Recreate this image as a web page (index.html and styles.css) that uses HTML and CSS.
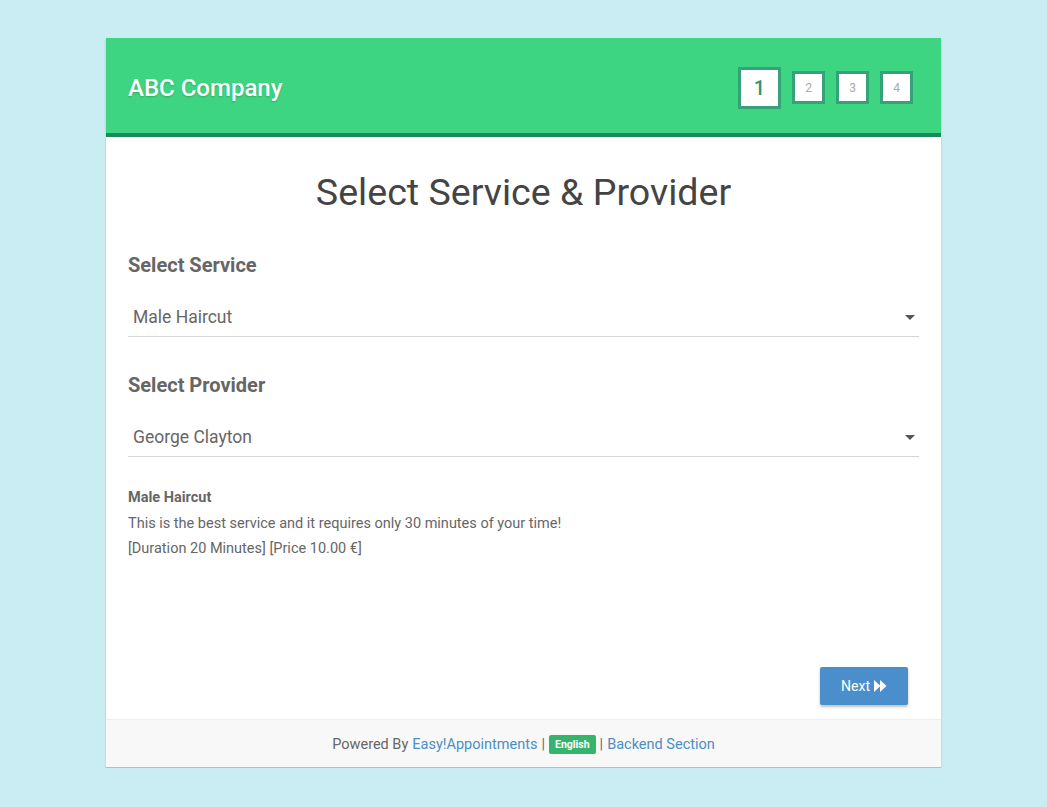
FILE: index.html
```html
<!DOCTYPE html>
<html>
<head>
<meta charset="utf-8">
<link rel="stylesheet" href="styles.css">
</head>
<body>
<div class="wizard">
  <header class="header">
    <div class="company">ABC Company</div>
    <div class="steps">
      <div class="step active">1</div>
      <div class="step">2</div>
      <div class="step">3</div>
      <div class="step">4</div>
    </div>
  </header>
  <main class="content">
    <h1 class="title">Select Service &amp; Provider</h1>
    <h2 class="label">Select Service</h2>
    <div class="select"><span>Male Haircut</span><span class="caret"></span></div>
    <h2 class="label">Select Provider</h2>
    <div class="select"><span>George Clayton</span><span class="caret"></span></div>
    <div class="details">
      <div class="details-name">Male Haircut</div>
      <div>This is the best service and it requires only 30 minutes of your time!</div>
      <div>[Duration 20 Minutes] [Price 10.00 €]</div>
    </div>
    <div class="actions">
      <button class="next">Next <svg width="13" height="12" viewBox="0 0 13 12"><path d="M0 0 L6.5 6 L0 12 Z M6 0 L12.5 6 L6 12 Z" fill="#fff"/></svg></button>
    </div>
  </main>
  <footer class="footer">
    Powered By <a class="link">Easy!Appointments</a> | <span class="badge">English</span> | <a class="link">Backend Section</a>
  </footer>
</div>
</body>
</html>
```
FILE: styles.css
```css
* { box-sizing: border-box; }
html, body { margin: 0; padding: 0; }
body {
  background: #caedf3;
  font-family: Roboto, "Liberation Sans", sans-serif;
  padding-top: 38px;
}
.wizard {
  width: 835px;
  margin-left: 106px;
  background: #fff;
  box-shadow: 0 1px 2px rgba(0,0,0,0.18);
}
.header {
  height: 99px;
  background: #3dd581;
  border-bottom: 4px solid #1b8a5a;
  display: flex;
  align-items: center;
  justify-content: space-between;
  padding: 0 28px 0 22px;
}
.company {
  color: #fff;
  font-size: 24px;
  font-weight: 500;
  text-shadow: 0 1px 2px rgba(0,0,0,0.2);
  margin-top: 4px;
}
.steps {
  display: flex;
  align-items: center;
  gap: 11px;
  margin-top: 4px;
}
.step {
  width: 33px;
  height: 33px;
  background: #fff;
  border: 3px solid #35a277;
  color: #aaa;
  font-size: 12px;
  display: flex;
  align-items: center;
  justify-content: center;
}
.step.active {
  width: 43px;
  height: 42px;
  color: #34946b;
  font-size: 20px;
  font-weight: 500;
}
.content {
  padding: 33px 22px 14px 22px;
}
.title {
  margin: 0 0 39px 0;
  text-align: center;
  font-size: 37.6px;
  font-weight: 400;
  color: #444;
  line-height: 44px;
}
.label {
  margin: 0 0 19px 0;
  font-size: 20px;
  font-weight: 700;
  color: #666;
  line-height: 24px;
}
.select {
  height: 41px;
  padding: 2px 4px 0 5px;
  border-bottom: 1px solid #d6d6d6;
  display: flex;
  align-items: center;
  justify-content: space-between;
  font-size: 17.5px;
  color: #666;
  margin-bottom: 36px;
}
.caret {
  width: 0; height: 0;
  border-left: 5px solid transparent;
  border-right: 5px solid transparent;
  border-top: 5px solid #555;
}
.details {
  margin-top: -8px;
  font-size: 14.5px;
  color: #666;
  line-height: 25.5px;
}
.details-name { font-weight: 700; }
.actions {
  display: flex;
  justify-content: flex-end;
  padding-right: 11px;
  margin-top: 105px;
}
.next {
  width: 88px;
  height: 38px;
  background: #4a8fcc;
  border: none;
  border-radius: 2px;
  color: #fff;
  font-family: Roboto, "Liberation Sans", sans-serif;
  font-size: 14px;
  box-shadow: 0 2px 3px rgba(0,0,0,0.25);
  display: flex;
  align-items: center;
  justify-content: center;
  gap: 4px;
}
.footer {
  height: 49px;
  padding-top: 2px;
  background: #f8f8f8;
  border-top: 1px solid #eee;
  display: flex;
  align-items: center;
  justify-content: center;
  gap: 4px;
  font-size: 14.5px;
  color: #666;
  border-bottom: 1px solid #bbb;
}
.link { color: #4a8fc4; text-decoration: none; }
.badge {
  background: #35b46d;
  color: #fff;
  font-size: 10.5px;
  font-weight: 700;
  padding: 3px 6px;
  border-radius: 2px;
  line-height: 13px;
}
```
